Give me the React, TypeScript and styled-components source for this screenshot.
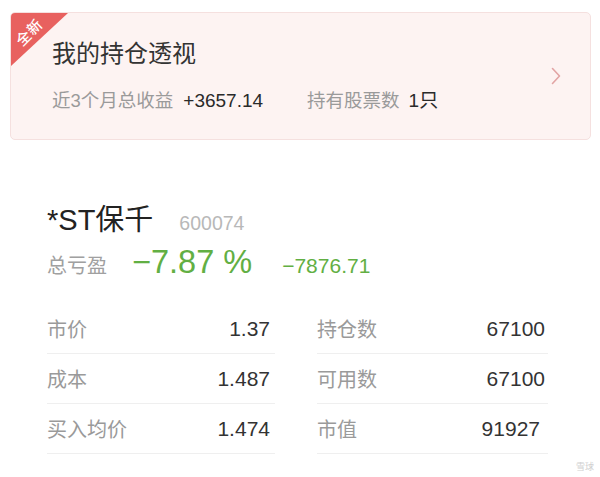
import styled, { createGlobalStyle } from "styled-components";

const GlobalStyle = createGlobalStyle`
  html, body {
    margin: 0;
    padding: 0;
    background: #ffffff;
  }
  body {
    font-family: "Liberation Sans", "Noto Sans CJK SC", sans-serif;
    color: #333;
  }
`;

interface Cell {
  label: string;
  value: string;
}

const leftCells: Cell[] = [
  { label: "市价", value: "1.37" },
  { label: "成本", value: "1.487" },
  { label: "买入均价", value: "1.474" },
];

const rightCells: Cell[] = [
  { label: "持仓数", value: "67100" },
  { label: "可用数", value: "67100" },
  { label: "市值", value: "91927" },
];

const App = () => {
  return (
    <Page>
      <GlobalStyle />
      <Card>
        <Ribbon>
          <span>全新</span>
        </Ribbon>
        <CardBody>
          <CardTitle>我的持仓透视</CardTitle>
          <SummaryRow>
            <SummaryLabel>近3个月总收益</SummaryLabel>
            <SummaryValue>+3657.14</SummaryValue>
            <SummaryLabel className="second">持有股票数</SummaryLabel>
            <SummaryValue>1只</SummaryValue>
          </SummaryRow>
        </CardBody>
        <Chevron width="10" height="18" viewBox="0 0 10 18">
          <path d="M1.5 1.5 L8.5 9 L1.5 16.5" fill="none" stroke="#e2a4a4" strokeWidth="1.6" strokeLinecap="round" strokeLinejoin="round" />
        </Chevron>
      </Card>

      <Stock>
        <NameRow>
          <StockName>*ST保千</StockName>
          <StockCode>600074</StockCode>
        </NameRow>
        <ProfitRow>
          <ProfitLabel>总亏盈</ProfitLabel>
          <ProfitPercent>−7.87 %</ProfitPercent>
          <ProfitAmount>−7876.71</ProfitAmount>
        </ProfitRow>
        <Table>
          <Column>
            {leftCells.map((c) => (
              <Row key={c.label}>
                <RowLabel>{c.label}</RowLabel>
                <RowValue>{c.value}</RowValue>
              </Row>
            ))}
          </Column>
          <Column>
            {rightCells.map((c, i) => (
              <Row key={c.label}>
                <RowLabel>{c.label}</RowLabel>
                <RowValue $inset={i === 2 ? 8 : 3}>{c.value}</RowValue>
              </Row>
            ))}
          </Column>
        </Table>
      </Stock>
      <Watermark>雪球</Watermark>
    </Page>
  );
};

const Page = styled.div`
  position: relative;
  width: 600px;
  height: 477px;
  overflow: hidden;
  padding-top: 12px;
  box-sizing: border-box;
`;

const Card = styled.div`
  position: relative;
  margin: 0 9px 0 10px;
  height: 128px;
  box-sizing: border-box;
  border: 1px solid #f5e0df;
  border-radius: 5px;
  background: #fdf3f2;
  display: flex;
  align-items: center;
  overflow: hidden;
`;

const Ribbon = styled.div`
  position: absolute;
  left: 0;
  top: 0;
  width: 57px;
  height: 53px;
  background: #e8615f;
  clip-path: polygon(0 0, 100% 0, 0 100%);

  & span {
    position: absolute;
    left: 2px;
    top: 8px;
    font-size: 14.5px;
    font-weight: 500;
    color: #fff;
    transform: rotate(-45deg);
    font-family: "Noto Sans CJK SC", sans-serif;
    letter-spacing: 1px;
  }
`;

const CardBody = styled.div`
  flex: 1;
  padding-left: 41px;
`;

const CardTitle = styled.div`
  font-size: 24px;
  line-height: 30px;
  color: #333;
  font-family: "Noto Sans CJK SC", sans-serif;
`;

const SummaryRow = styled.div`
  display: flex;
  align-items: baseline;
  margin-top: 20px;
  line-height: 28px;
`;

const SummaryLabel = styled.span`
  font-size: 18.5px;
  color: #9a9a9a;
  margin-right: 10px;

  &.second {
    margin-left: 44px;
    margin-right: 9px;
  }
`;

const SummaryValue = styled.span`
  font-size: 19px;
  color: #2a2a2a;
`;

const Chevron = styled.svg`
  margin-right: 29px;
  flex-shrink: 0;
`;

const Stock = styled.div`
  padding-left: 47px;
  margin-top: 63px;
`;

const NameRow = styled.div`
  display: flex;
  align-items: baseline;
  height: 34px;
  line-height: 34px;
`;

const StockName = styled.span`
  font-size: 29px;
  color: #222;
`;

const StockCode = styled.span`
  font-size: 19.5px;
  color: #b8b8b8;
  margin-left: 26px;
`;

const ProfitRow = styled.div`
  display: flex;
  align-items: baseline;
  height: 40px;
  line-height: 40px;
  margin-top: 5px;
`;

const ProfitLabel = styled.span`
  font-size: 20px;
  color: #a0a0a0;
  margin-right: 25px;
`;

const ProfitPercent = styled.span`
  font-size: 32.5px;
  color: #62af43;
  margin-right: 30px;
`;

const ProfitAmount = styled.span`
  font-size: 21px;
  color: #62af43;
`;

const Table = styled.div`
  display: grid;
  grid-template-columns: 228px 231px;
  column-gap: 42px;
  margin-top: 22px;
`;

const Column = styled.div`
  display: flex;
  flex-direction: column;
`;

const Row = styled.div`
  display: flex;
  align-items: center;
  justify-content: space-between;
  height: 50px;
  box-sizing: border-box;
  border-bottom: 1px solid #efefef;
`;

const RowLabel = styled.span`
  font-size: 20px;
  color: #9a9a9a;
  padding-bottom: 1px;
`;

const RowValue = styled.span<{ $inset?: number }>`
  font-size: 21px;
  color: #333;
  padding-right: ${(p) => p.$inset ?? 5}px;
`;

const Watermark = styled.div`
  position: absolute;
  right: 6px;
  bottom: 4px;
  font-size: 9px;
  color: #d0d0d0;
  font-family: "Noto Sans CJK SC", sans-serif;
`;

export default App;
